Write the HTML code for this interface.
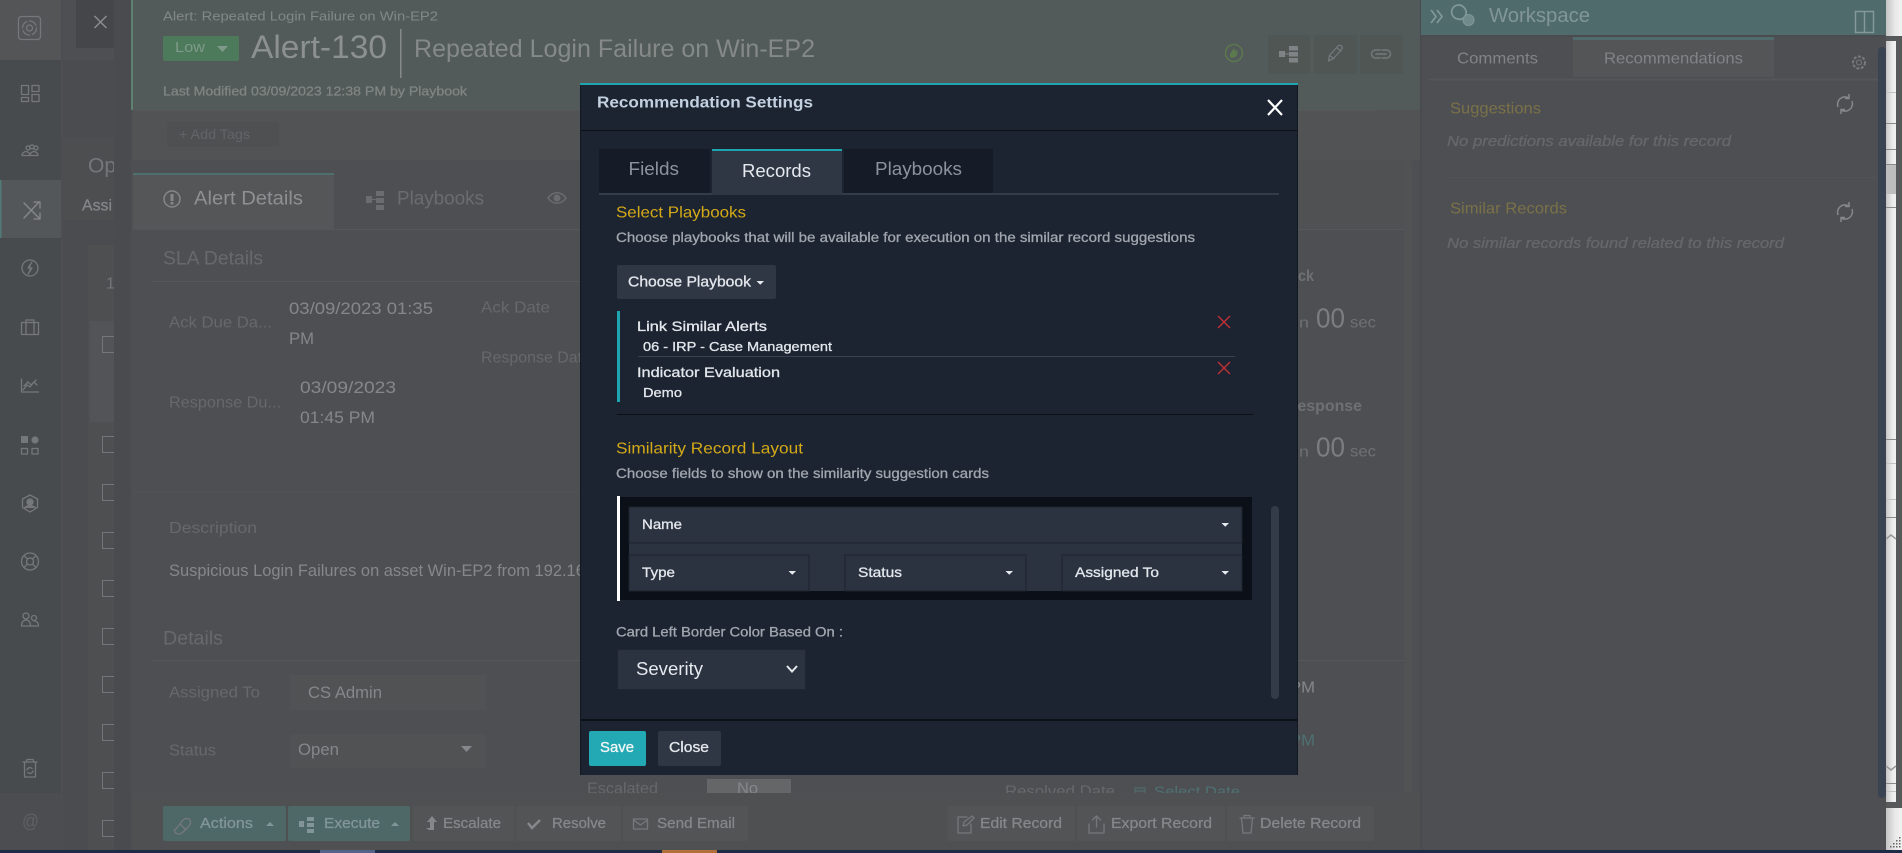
<!DOCTYPE html>
<html lang="en"><head><meta charset="utf-8"><title>Recommendation Settings</title>
<style>
html,body{margin:0;padding:0;width:1902px;height:853px;overflow:hidden;background:#4c4e51}
svg{display:block;font-family:"Liberation Sans",sans-serif}
text{dominant-baseline:central;white-space:pre;transform:translateY(1px)}
text.n{transform:none}
.i{fill:none;stroke:#75787b;stroke-width:1.3;stroke-linecap:round;stroke-linejoin:round}
.b{font-weight:700}
.w{fill:#e4e7ec;stroke:#e4e7ec;stroke-width:.3}
.p{fill:#a1a6ae;stroke:#a1a6ae;stroke-width:.3}
.d{fill:#85888a;stroke:#85888a;stroke-width:.25}
.t{fill:#82969a;stroke:#82969a;stroke-width:.25}
</style></head><body>
<svg width="1902" height="853" viewBox="0 0 1902 853" xmlns="http://www.w3.org/2000/svg">
<rect width="1902" height="853" fill="#4c4e51"/>
<!-- sidebar -->
<rect x="0" y="0" width="61" height="850" fill="#484b4e"/>
<rect x="0" y="0" width="61" height="60" fill="#535557"/>
<rect x="0" y="180" width="61" height="58" fill="#54575a"/>
<rect x="0" y="180" width="1.5" height="58" fill="#4f7a78"/>
<rect x="0" y="793" width="61" height="57" fill="#4b4d50"/>
<g class="i">
<rect x="18.5" y="16.5" width="22" height="23" rx="3"/><circle cx="29.5" cy="28" r="3" /><circle cx="29.5" cy="28" r="7" stroke-dasharray="8 3"/>
<path d="M21.5 85.5h7v9h-7zM32 85.5h7v6h-7zM32 94.5h7v7h-7zM21.5 97.5h7v4h-7z"/>
<path d="M22 155.5c0-3 3-4 4-4s4 1 4 4M30 155.5c0-3 3-4 4-4s4 1 4 4zM22 155.5h16M26 148a2 2 0 1 0 0-.1M30 147a2 2 0 1 0 0-.1M34 148a2 2 0 1 0 0-.1"/>
<path d="M24 203l16 16h0M24 218l15-16M34 202h6v6M34 219h6v-6" stroke="#86898c"/>
<circle cx="30" cy="268" r="8"/><path d="M32 262l-4 6h4l-4 6" fill="#75787b"/>
<path d="M21.5 322.5h17v12h-17zM26 322.5v12M34 322.5v12M26 322.5v-2.5h8v2.5"/>
<path d="M21.5 379v13h17M23 390l4-5 3 2 4-5 3 3M24 386l4-4 3 3 5-5"/>
</g>
<rect x="21" y="436" width="7" height="7" fill="#75787b"/><circle cx="35" cy="440" r="3.6" fill="#75787b"/>
<g class="i">
<path d="M21.5 448.5h6v5.5h-6zM32 448.5h6v5.5h-6z"/>
<path d="M30 495l7.5 4v8.5L30 512l-7.5-4.500v-8.500z"/><circle cx="30" cy="502" r="3" fill="#75787b"/><path d="M24.500 508c2-3 9-3 11 0" fill="#75787b"/>
<circle cx="30" cy="561.500" r="8.500"/><circle cx="30" cy="561.500" r="3.500"/><path d="M24 555.500l3.500 3.500M36 555.500l-3.500 3.500M24 567.500l3.500-3.500M36 567.500l-3.500-3.500"/>
<circle cx="26" cy="616" r="3"/><circle cx="34" cy="618" r="2.500"/><path d="M21.500 626c0-5 3-6 4.500-6s4.500 1 4.500 6zM31 626h7.500c0-3.500-2-5-4.500-5"/>
<path d="M23 762h14M26 762l1-2.500h6l1 2.500M24.500 762v15h11v-15M27 770a3 3 0 0 1 5-1.500M33 771a3 3 0 0 1-5 1.500"/>
</g>
<text x="22" y="821" font-size="19" fill="#5e6164" textLength="17" lengthAdjust="spacingAndGlyphs">@</text>
<!-- second column -->
<rect x="63" y="0" width="68" height="850" fill="#4a4c4f"/>
<rect x="63" y="0" width="51" height="60" fill="#4d4f52"/>
<rect x="76" y="0" width="38" height="48" fill="#444649"/>
<path d="M94.500 16l12 12M106.500 16l-12 12" stroke="#8a8c8e" stroke-width="1.500"/>
<rect x="63" y="137" width="51" height="83" fill="#4c4e50"/>
<text x="88" y="165" font-size="21" fill="#75777a">Op</text>
<text x="82" y="205" font-size="16" class="d" textLength="30" lengthAdjust="spacingAndGlyphs">Assi</text>
<rect x="88" y="245" width="26" height="605" fill="#4d4f51"/>
<text x="106" y="283" font-size="16" fill="#737578">1</text>
<rect x="90" y="321" width="24" height="101" fill="#525457"/>
<g fill="none" stroke="#74777a" stroke-width="1">
<path d="M114 336.500h-11.500v16h11.500M114 436.500h-11.500v16h11.500M114 484.500h-11.500v16h11.500M114 532.500h-11.500v16h11.500M114 580.500h-11.500v16h11.500M114 628.500h-11.500v16h11.500M114 676.500h-11.500v16h11.500M114 724.500h-11.500v16h11.500M114 772.500h-11.500v16h11.500M114 820.500h-11.500v16h11.500"/>
</g>
<rect x="114" y="0" width="17" height="850" fill="#494b4e"/>
<!-- main -->
<rect x="131" y="0" width="1290" height="850" fill="#4d4f52"/>
<rect x="131" y="0" width="1290" height="110" fill="#525b59"/>
<rect x="131" y="0" width="2" height="110" fill="#5d8270"/>
<rect x="133" y="110" width="1288" height="50" fill="#515355"/>
<line x1="133" y1="110.500" x2="1376" y2="110.500" stroke="#565859"/>
<text x="163" y="15" font-size="13" fill="#838886" textLength="275" lengthAdjust="spacingAndGlyphs">Alert: Repeated Login Failure on Win-EP2</text>
<rect x="163" y="36" width="76" height="25" rx="2" fill="#4d7a5b"/>
<text x="175" y="46.500" font-size="15" fill="#7f9a8a" textLength="30" lengthAdjust="spacingAndGlyphs">Low</text>
<path d="M217 46h11l-5.500 6z" fill="#7f9a8a"/>
<text x="251" y="46" font-size="32" fill="#8c9090" textLength="136" lengthAdjust="spacingAndGlyphs">Alert-130</text>
<rect x="400" y="29" width="1.500" height="49" fill="#85898a"/>
<text x="414" y="48" font-size="25" fill="#858988" textLength="401" lengthAdjust="spacingAndGlyphs">Repeated Login Failure on Win-EP2</text>
<text x="163" y="90.500" font-size="12.500" fill="#808482" stroke="#808482" stroke-width=".3" textLength="304" lengthAdjust="spacingAndGlyphs">Last Modified 03/09/2023 12:38 PM by Playbook</text>
<rect x="167" y="122" width="112" height="25" rx="2" fill="#4e5052"/>
<text x="179" y="133" font-size="14" fill="#626567" textLength="71" lengthAdjust="spacingAndGlyphs">+ Add Tags</text>
<!-- header right buttons -->
<circle cx="1234" cy="53" r="8.500" fill="none" stroke="#5d7a4e" stroke-width="1.300"/>
<path d="M1230 57c-1-3 1-4 2-6l2-3 1 3 2-1c1 3 0 6-2 7s-4 1-5 0z" fill="#5d7a4e"/>
<rect x="1268" y="35" width="42" height="39" rx="2" fill="#4f5654"/>
<rect x="1314" y="35" width="43" height="39" rx="2" fill="#4f5654"/>
<rect x="1360" y="35" width="43" height="39" rx="2" fill="#4f5654"/>
<g fill="#808385"><rect x="1279" y="51" width="6" height="6"/><rect x="1289" y="46" width="9" height="4.500"/><rect x="1289" y="52" width="9" height="4.500"/><rect x="1289" y="58" width="9" height="4.500"/><rect x="1285" y="53.500" width="4" height="1"/></g>
<g class="i" stroke="#808385"><path d="M1328.500 61l1-5.500 8.500-9.500c1-1 2.500-1 3.500 0s1 2 .5 3l-8.500 9.500zM1329.500 55.500l4.500 3M1336.500 47.500l4.500 3.500"/>
<path d="M1380 50h-4.500a4 4 0 0 0 0 8h4.500M1382 50h4.500a4 4 0 0 1 0 8h-4.500M1376 54h10" stroke-width="1.500"/></g>
<!-- tabs -->
<line x1="133" y1="229.500" x2="1404" y2="229.500" stroke="#555759"/>
<rect x="133" y="173" width="201" height="57" fill="#545658"/>
<rect x="133" y="173" width="201" height="2" fill="#4d6f6e"/>
<circle cx="172" cy="199" r="8" fill="none" stroke="#858789" stroke-width="1.500"/><rect x="170.500" y="194" width="3" height="7" fill="#858789"/><rect x="170.500" y="202" width="3" height="2.500" fill="#858789"/>
<text x="194" y="198" font-size="19" fill="#8e9092" textLength="109" lengthAdjust="spacingAndGlyphs">Alert Details</text>
<g fill="#6a6d6f"><rect x="366" y="196" width="6" height="7"/><rect x="376" y="191" width="8" height="5"/><rect x="376" y="198" width="8" height="5"/><rect x="376" y="205" width="8" height="5"/><rect x="372" y="199" width="4" height="1"/></g>
<text x="397" y="198" font-size="19" fill="#6a6d6f" textLength="87" lengthAdjust="spacingAndGlyphs">Playbooks</text>
<path d="M548 198c5-7 13-7 18 0c-5 7-13 7-18 0z" fill="none" stroke="#6a6d6f" stroke-width="1.500"/><circle cx="557" cy="198" r="3.500" fill="#6a6d6f"/>
<text x="163" y="258" font-size="19" fill="#67696c" textLength="100" lengthAdjust="spacingAndGlyphs">SLA Details</text>
<line x1="151" y1="281.500" x2="1298" y2="281.500" stroke="#555759"/>
<text x="169" y="322" font-size="16" fill="#66696b" textLength="103" lengthAdjust="spacingAndGlyphs">Ack Due Da...</text>
<text x="289" y="308" font-size="16.500" fill="#85878a" textLength="144" lengthAdjust="spacingAndGlyphs">03/09/2023 01:35</text>
<text x="289" y="338" font-size="16.500" fill="#85878a" textLength="25" lengthAdjust="spacingAndGlyphs">PM</text>
<text x="481" y="307" font-size="16" fill="#66696b" textLength="69" lengthAdjust="spacingAndGlyphs">Ack Date</text>
<text x="481" y="357" font-size="16" fill="#66696b" textLength="110" lengthAdjust="spacingAndGlyphs">Response Date</text>
<text x="169" y="402" font-size="16" fill="#66696b" textLength="112" lengthAdjust="spacingAndGlyphs">Response Du...</text>
<text x="300" y="387" font-size="16.500" fill="#85878a" textLength="96" lengthAdjust="spacingAndGlyphs">03/09/2023</text>
<text x="300" y="417" font-size="16.500" fill="#85878a" textLength="75" lengthAdjust="spacingAndGlyphs">01:45 PM</text>
<line x1="133" y1="491.500" x2="1298" y2="491.500" stroke="#505255"/>
<text x="169" y="527.500" font-size="16" fill="#66696b" textLength="88" lengthAdjust="spacingAndGlyphs">Description</text>
<text x="169" y="570" font-size="16.500" fill="#85878a" textLength="425" lengthAdjust="spacingAndGlyphs">Suspicious Login Failures on asset Win-EP2 from 192.168</text>
<text x="163" y="638" font-size="19" fill="#67696c" textLength="60" lengthAdjust="spacingAndGlyphs">Details</text>
<line x1="151" y1="660.500" x2="1404" y2="660.500" stroke="#555759"/>
<text x="169" y="692" font-size="16" fill="#66696b" textLength="91" lengthAdjust="spacingAndGlyphs">Assigned To</text>
<rect x="290" y="675" width="196" height="35" fill="#505254"/>
<text x="308" y="692" font-size="16.500" fill="#85878a" textLength="74" lengthAdjust="spacingAndGlyphs">CS Admin</text>
<text x="169" y="750" font-size="16" fill="#66696b" textLength="47" lengthAdjust="spacingAndGlyphs">Status</text>
<rect x="290" y="734" width="196" height="34" fill="#505254"/>
<text x="298" y="749" font-size="16.500" fill="#85878a" textLength="41" lengthAdjust="spacingAndGlyphs">Open</text>
<path d="M461 746h11l-5.500 6z" fill="#85878a"/>
<text x="587" y="788" font-size="16" fill="#66696b" textLength="71" lengthAdjust="spacingAndGlyphs">Escalated</text>
<rect x="707" y="779" width="84" height="14" fill="#646668"/>
<text x="737" y="788" font-size="16" fill="#85878a" textLength="21" lengthAdjust="spacingAndGlyphs">No</text>
<text x="1005" y="791" font-size="16" fill="#66696b" textLength="110" lengthAdjust="spacingAndGlyphs">Resolved Date</text>
<path d="M1135 788h10v8h-10zM1135 791h10" fill="none" stroke="#4f7072"/>
<text x="1154" y="791" font-size="15" fill="#4f7072" textLength="86" lengthAdjust="spacingAndGlyphs">Select Date</text>
<!-- right of modal -->
<rect x="1298" y="160" width="106" height="69" fill="#4f5153"/>
<rect x="1404" y="160" width="8" height="690" rx="4" fill="#505254"/>
<text x="1298" y="275.500" font-size="16" class="b" fill="#6e7173" textLength="16" lengthAdjust="spacingAndGlyphs">ck</text>
<text x="1295" y="322" font-size="15" fill="#6e7173" textLength="14" lengthAdjust="spacingAndGlyphs">in</text>
<text x="1316" y="317" font-size="28" fill="#7b7e80" textLength="29" lengthAdjust="spacingAndGlyphs">00</text>
<text x="1350" y="322" font-size="16" fill="#6e7173" textLength="26" lengthAdjust="spacingAndGlyphs">sec</text>
<text x="1286" y="405.500" font-size="16" class="b" fill="#6e7173" textLength="76" lengthAdjust="spacingAndGlyphs">Response</text>
<text x="1295" y="451" font-size="15" fill="#6e7173" textLength="14" lengthAdjust="spacingAndGlyphs">in</text>
<text x="1316" y="446" font-size="28" fill="#7b7e80" textLength="29" lengthAdjust="spacingAndGlyphs">00</text>
<text x="1350" y="451" font-size="16" fill="#6e7173" textLength="26" lengthAdjust="spacingAndGlyphs">sec</text>
<text x="1290" y="687" font-size="16" fill="#85878a" textLength="25" lengthAdjust="spacingAndGlyphs">PM</text>
<text x="1290" y="740" font-size="16" fill="#4f7072" textLength="25" lengthAdjust="spacingAndGlyphs">PM</text>
<!-- bottom bar -->
<rect x="133" y="793" width="1288" height="57" fill="#4e5052"/>
<rect x="163" y="806" width="123" height="35" rx="2" fill="#4e6868"/>
<rect x="288" y="806" width="122" height="35" rx="2" fill="#4e6868"/>
<rect x="413" y="806" width="101" height="35" rx="2" fill="#525456"/>
<rect x="516" y="806" width="105" height="35" rx="2" fill="#525456"/>
<rect x="623" y="806" width="125" height="35" rx="2" fill="#525456"/>
<rect x="947" y="806" width="128" height="35" rx="2" fill="#525456"/>
<rect x="1077" y="806" width="148" height="35" rx="2" fill="#525456"/>
<rect x="1227" y="806" width="147" height="35" rx="2" fill="#525456"/>
<g font-size="14.500">
<text x="200" y="823" class="t" textLength="53" lengthAdjust="spacingAndGlyphs">Actions</text>
<text x="324" y="823" class="t" textLength="56" lengthAdjust="spacingAndGlyphs">Execute</text>
<text x="443" y="823" class="d" textLength="58" lengthAdjust="spacingAndGlyphs">Escalate</text>
<text x="552" y="823" class="d" textLength="54" lengthAdjust="spacingAndGlyphs">Resolve</text>
<text x="657" y="823" class="d" textLength="78" lengthAdjust="spacingAndGlyphs">Send Email</text>
<text x="980" y="823" class="d" textLength="82" lengthAdjust="spacingAndGlyphs">Edit Record</text>
<text x="1111" y="823" class="d" textLength="101" lengthAdjust="spacingAndGlyphs">Export Record</text>
<text x="1260" y="823" class="d" textLength="101" lengthAdjust="spacingAndGlyphs">Delete Record</text>
</g>
<path d="M266 826h8l-4-4zM391 826h8l-4-4z" fill="#82969a"/>
<g class="i" stroke="#82969a"><path d="M176 829l7-9c2-2 6-2 7 0s1 4-1 6l-7 7c-3 2-6 1-7-1s-1-2 1-3zM180 824l6 6"/></g>
<g fill="#82969a"><rect x="299" y="821" width="5" height="6"/><rect x="307" y="817" width="7" height="4"/><rect x="307" y="823" width="7" height="4"/><rect x="307" y="829" width="7" height="4"/></g>
<path d="M429 830h5v-8h3l-5-6-5 6h3v6h-4z" fill="#85888a"/>
<path d="M528 823l4 5 8-8" fill="none" stroke="#85888a" stroke-width="2.500"/>
<g class="i" stroke="#7a7d7f"><path d="M633.500 819h14v10h-14zM633.500 820l7 5 7-5"/>
<path d="M967 817h-9v16h13v-9M963 826l1-4 8-6 2 2-7 7z"/>
<path d="M1089 824v9h15v-9M1096.500 827v-11M1092.500 820l4-4 4 4"/>
<path d="M1240 818h14M1244 818v-2.500h6v2.500M1241.500 818l1.500 15h8l1.500-15"/></g>
<!-- workspace -->
<rect x="1421" y="0" width="465" height="850" fill="#4d4f52"/>
<rect x="1420" y="0" width="2" height="850" fill="#494b4e"/>
<rect x="1421" y="0" width="465" height="35" fill="#4f6b6b"/>
<rect x="1421" y="35" width="465" height="2" fill="#4a4c4f"/>
<path d="M1431 10l5 6.500-5 6.500M1437 10l5 6.500-5 6.500" fill="none" stroke="#82989a" stroke-width="1.700"/>
<path d="M1464 7.500a7 7 0 1 0-5.500 11.500l1 .5a7 7 0 0 0 4.500-12z" fill="none" stroke="#82989a" stroke-width="1.700"/>
<circle cx="1468.500" cy="20" r="5.500" fill="#6f8a8b" stroke="#82989a"/>
<text x="1489" y="15" font-size="20" fill="#82969a" textLength="101" lengthAdjust="spacingAndGlyphs">Workspace</text>
<rect x="1855.500" y="11.500" width="18" height="21" fill="none" stroke="#82989a" stroke-width="1.500"/><line x1="1864.500" y1="11.500" x2="1864.500" y2="32.500" stroke="#82989a" stroke-width="1.500"/>
<rect x="1573" y="37" width="201" height="40" fill="#535557"/>
<rect x="1573" y="37" width="201" height="3" fill="#4f6b6b"/>
<text x="1457" y="58" font-size="16" fill="#818486" textLength="81" lengthAdjust="spacingAndGlyphs">Comments</text>
<text x="1604" y="58" font-size="16" fill="#818486" textLength="139" lengthAdjust="spacingAndGlyphs">Recommendations</text>
<line x1="1429" y1="79.500" x2="1878" y2="79.500" stroke="#545658" stroke-width="2"/>
<circle cx="1859" cy="62.500" r="6" fill="none" stroke="#787b7d" stroke-width="2" stroke-dasharray="3 1.500"/><circle cx="1859" cy="62.500" r="2.500" fill="none" stroke="#787b7d"/>
<text x="1450" y="108" font-size="16" fill="#7b7148" textLength="91" lengthAdjust="spacingAndGlyphs">Suggestions</text>
<text x="1447" y="141.500" class="n" font-size="15" font-style="italic" fill="#65686a" stroke="#65686a" stroke-width=".3" textLength="284" lengthAdjust="spacingAndGlyphs">No predictions available for this record</text>
<line x1="1447" y1="177.500" x2="1876" y2="177.500" stroke="#515355"/>
<text x="1450" y="208" font-size="16" fill="#7b7148" textLength="117" lengthAdjust="spacingAndGlyphs">Similar Records</text>
<text x="1447" y="243.500" class="n" font-size="15" font-style="italic" fill="#65686a" stroke="#65686a" stroke-width=".3" textLength="337" lengthAdjust="spacingAndGlyphs">No similar records found related to this record</text>
<g fill="none" stroke="#85888a" stroke-width="1.500">
<path d="M1838 107a7.500 7.500 0 0 1 11-9M1852 101a7.500 7.500 0 0 1-11 9M1849 94v4.500h-4M1841 114v-4.500h4"/>
<path d="M1838 215a7.500 7.500 0 0 1 11-9M1852 209a7.500 7.500 0 0 1-11 9M1849 202v4.500h-4M1841 222v-4.500h4"/>
</g>
<rect x="1878" y="47" width="8" height="751" rx="4" fill="#3a4351"/>
<!-- right white strip -->
<defs><linearGradient id="g" x1="0" x2="1" y1="0" y2="0"><stop offset="0" stop-color="#c4c4c4"/><stop offset=".6" stop-color="#eaeaea"/><stop offset="1" stop-color="#f2f2f2"/></linearGradient></defs>
<rect x="1886" y="0" width="16" height="850" fill="#57585a"/>
<rect x="1886" y="0" width="16" height="36" fill="url(#g)"/>
<rect x="1886" y="41" width="10" height="761" fill="url(#g)"/>
<rect x="1886" y="808" width="16" height="42" fill="url(#g)"/>
<rect x="1886" y="164" width="10" height="30" fill="#bdbdbd"/>
<g stroke="#8a8a8a"><path d="M1886 123.500h10M1886 149.500h10M1886 164.500h10M1886 207.500h10M1886 439.500h10M1886 517.500h10M1886 783.500h10"/></g>
<g stroke="#c2c2c2"><path d="M1886 92.500h10M1886 463.500h10M1886 499.500h10M1886 791.500h10"/></g>
<path d="M1886 539l5-4 5 4M1886 766l5 4 5-4" fill="none" stroke="#999" stroke-width="1.500"/>
<g fill="#666"><rect x="1899" y="837" width="1.500" height="1.500"/><rect x="1896" y="840" width="1.500" height="1.500"/><rect x="1899" y="840" width="1.500" height="1.500"/><rect x="1893" y="843" width="1.500" height="1.500"/><rect x="1896" y="843" width="1.500" height="1.500"/><rect x="1899" y="843" width="1.500" height="1.500"/><rect x="1890" y="846" width="1.500" height="1.500"/><rect x="1893" y="846" width="1.500" height="1.500"/><rect x="1896" y="846" width="1.500" height="1.500"/><rect x="1899" y="846" width="1.500" height="1.500"/></g>
<!-- bottom strip -->
<rect x="0" y="850" width="1902" height="3" fill="#1d2b47"/>
<rect x="320" y="850" width="55" height="3" fill="#55638a"/>
<rect x="662" y="850" width="55" height="3" fill="#b16f3a"/>
<!-- modal -->
<rect x="580" y="83" width="718" height="692" fill="#1c2431"/>
<rect x="580" y="83" width="718" height="2" fill="#1fa5b0"/>
<rect x="580" y="85" width="1" height="690" fill="#121821"/>
<rect x="1297" y="85" width="1" height="690" fill="#121821"/>
<rect x="581" y="130" width="716" height="1" fill="#0c1118"/>
<text x="597" y="102" font-size="16" class="b" fill="#c3d0e0" textLength="216" lengthAdjust="spacingAndGlyphs">Recommendation Settings</text>
<path d="M1269 100l14 15M1283 100l-14 15" stroke="#fff" stroke-width="2.200" fill="none" transform="translate(-1,0)"/>
<rect x="599" y="149" width="111" height="44" fill="#151c27"/>
<rect x="844" y="149" width="149" height="44" fill="#151c27"/>
<rect x="599" y="193" width="680" height="2" fill="#353c49"/>
<rect x="712" y="149" width="130" height="46" fill="#2f3744"/>
<rect x="712" y="149" width="130" height="2" fill="#1fa5b0"/>
<text x="628.500" y="169" class="n" font-size="18" fill="#8b939f" textLength="50.500" lengthAdjust="spacingAndGlyphs">Fields</text>
<text x="742" y="171" class="n" font-size="18" fill="#e6e9ee" textLength="69" lengthAdjust="spacingAndGlyphs">Records</text>
<text x="875" y="169" class="n" font-size="18" fill="#8b939f" textLength="87" lengthAdjust="spacingAndGlyphs">Playbooks</text>
<text x="616" y="212" font-size="16" fill="#d3a917" textLength="130" lengthAdjust="spacingAndGlyphs">Select Playbooks</text>
<text x="616" y="237.500" font-size="13.500" class="n p" textLength="579" lengthAdjust="spacingAndGlyphs">Choose playbooks that will be available for execution on the similar record suggestions</text>
<rect x="617" y="265" width="159" height="34" rx="2" fill="#2f3744"/>
<text x="628" y="281.500" font-size="14.500" class="w" textLength="123" lengthAdjust="spacingAndGlyphs">Choose Playbook</text>
<path d="M756.500 281h7.500l-3.750 3.800z" fill="#e6e9ee"/>
<rect x="617" y="311" width="3" height="91" fill="#1fa5b0"/>
<text x="637" y="326" font-size="14" class="n w" textLength="130" lengthAdjust="spacingAndGlyphs">Link Similar Alerts</text>
<text x="643" y="346.500" font-size="13" class="n w" textLength="189" lengthAdjust="spacingAndGlyphs">06 - IRP - Case Management</text>
<rect x="638" y="356" width="597" height="1" fill="#3a414e"/>
<text x="637" y="372" font-size="14" class="n w" textLength="143" lengthAdjust="spacingAndGlyphs">Indicator Evaluation</text>
<text x="643" y="392.500" font-size="13" class="n w" textLength="39" lengthAdjust="spacingAndGlyphs">Demo</text>
<path d="M1218 316l12 12M1230 316l-12 12M1218 362l12 12M1230 362l-12 12" stroke="#c02f36" stroke-width="1.400" fill="none"/>
<rect x="617" y="414" width="636" height="1" fill="#0c1118"/>
<text x="616" y="448" font-size="16" fill="#d3a917" textLength="187" lengthAdjust="spacingAndGlyphs">Similarity Record Layout</text>
<text x="616" y="473.500" font-size="13.500" class="n p" textLength="373" lengthAdjust="spacingAndGlyphs">Choose fields to show on the similarity suggestion cards</text>
<rect x="617" y="497" width="635" height="103" fill="#0b1018"/>
<rect x="617" y="496" width="3" height="105" fill="#fff"/>
<rect x="629" y="507" width="613" height="84" fill="#2b3240"/>
<rect x="629" y="507" width="613" height="36" fill="#2b3240" stroke="#1c222d"/>
<rect x="629" y="555" width="180" height="36" fill="#2b3240" stroke="#1c222d"/>
<rect x="845" y="555" width="181" height="36" fill="#2b3240" stroke="#1c222d"/>
<rect x="1062" y="555" width="180" height="36" fill="#2b3240" stroke="#1c222d"/>
<g font-size="14">
<text x="642" y="524" class="n w" textLength="40" lengthAdjust="spacingAndGlyphs">Name</text>
<text x="642" y="572" class="n w" textLength="33" lengthAdjust="spacingAndGlyphs">Type</text>
<text x="858" y="572" class="n w" textLength="44" lengthAdjust="spacingAndGlyphs">Status</text>
<text x="1075" y="572" class="n w" textLength="84" lengthAdjust="spacingAndGlyphs">Assigned To</text>
</g>
<path d="M1221.500 523h7.500l-3.750 3.800zM1221.500 571h7.500l-3.750 3.800zM788.500 571h7.500l-3.750 3.800zM1005.500 571h7.500l-3.750 3.800z" fill="#e6e9ee"/>
<rect x="1271" y="506" width="8" height="193" rx="4" fill="#333b49"/>
<text x="616" y="632" font-size="13.500" class="n p" textLength="227" lengthAdjust="spacingAndGlyphs">Card Left Border Color Based On :</text>
<rect x="617.500" y="649.500" width="188" height="40" fill="#2b3240" stroke="#202632"/>
<text x="636" y="669" class="n" font-size="18" fill="#e6e9ee" textLength="67" lengthAdjust="spacingAndGlyphs">Severity</text>
<path d="M787 666l5 5.500 5-5.500" fill="none" stroke="#e6e9ee" stroke-width="2"/>
<rect x="581" y="719" width="716" height="2" fill="#0c1118"/>
<rect x="589" y="731" width="57" height="35" rx="2" fill="#23a9b3"/>
<text x="600" y="748" font-size="14.500" class="n" fill="#f2f6f7" stroke="#f2f6f7" stroke-width=".3" textLength="34" lengthAdjust="spacingAndGlyphs">Save</text>
<rect x="658" y="731" width="63" height="35" rx="2" fill="#2f3744"/>
<text x="669" y="748" font-size="14.500" class="n w" textLength="40" lengthAdjust="spacingAndGlyphs">Close</text>
</svg>
</body></html>
